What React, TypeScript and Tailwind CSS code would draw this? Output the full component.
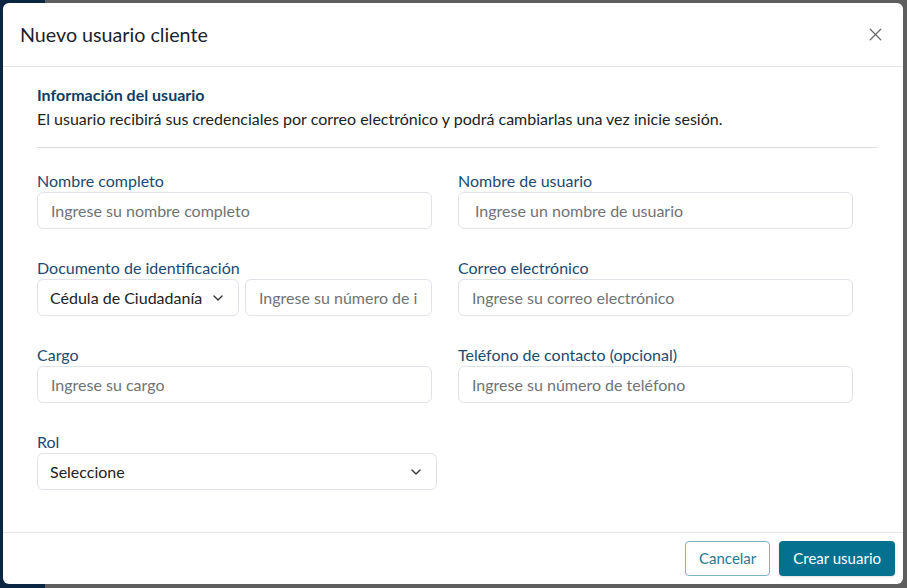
import React from "react";
import { ChevronDown, X } from "lucide-react";

const Field: React.FC<{ label: string; children: React.ReactNode }> = ({
  label,
  children,
}) => (
  <div className="flex flex-col">
    <label className="mb-px text-[16px] leading-[20px] text-[#1c4a72]">
      {label}
    </label>
    {children}
  </div>
);

const inputCls =
  "h-[37px] w-full rounded-md border border-[#dfe3e8] bg-white px-[13px] text-[16px] text-[#333] placeholder:text-[#6f7378] outline-none";

const App: React.FC = () => {
  return (
    <div
      className="relative h-[588px] w-[907px] overflow-hidden bg-[#6a6a6a]"
      style={{ fontFamily: "Lato, 'Open Sans', sans-serif" }}
    >
      {/* page behind the overlay */}
      <div className="flex h-full">
        <div className="w-[45px] bg-[#0b2643]" />
        <div className="flex-1 bg-[#5e5e5e]" />
      </div>

      {/* Modal */}
      <div className="absolute left-[3px] top-[3px] flex h-[581px] w-[900px] flex-col rounded-md bg-white">
        {/* Header */}
        <div className="flex h-[64px] items-center justify-between border-b border-[#e3e5e8] pl-[17px] pr-[17px]">
          <h2 className="text-[19.7px] text-[#1b1f2e]">Nuevo usuario cliente</h2>
          <X className="h-[21px] w-[21px] text-[#6b6b6b]" strokeWidth={1.5} />
        </div>

        {/* Body */}
        <div className="flex-1 pl-[34px] pr-[25px] pt-[18px]">
          <h3 className="text-[16px] font-bold leading-[20px] text-[#0f3d63]">
            Información del usuario
          </h3>
          <p className="mt-[4px] text-[16px] leading-[20px] text-[#222]">
            El usuario recibirá sus credenciales por correo electrónico y podrá
            cambiarlas una vez inicie sesión.
          </p>
          <div className="mt-[18px] border-t border-[#dcdfe3]" />

          <div className="mt-[23px] grid w-[816px] grid-cols-2 gap-x-[26px] gap-y-[29px]">
            <Field label="Nombre completo">
              <input className={inputCls} placeholder="Ingrese su nombre completo" />
            </Field>
            <Field label="Nombre de usuario">
              <input
                className={inputCls + " pl-[16px]"}
                placeholder="Ingrese un nombre de usuario"
              />
            </Field>

            <Field label="Documento de identificación">
              <div className="flex gap-[6px]">
                <div className="flex h-[37px] w-[202px] shrink-0 items-center justify-between rounded-md border border-[#dfe3e8] pl-[12px] pr-[12px] text-[16px] text-[#222]">
                  <span>Cédula de Ciudadanía</span>
                  <ChevronDown className="h-[16px] w-[16px] text-[#333]" strokeWidth={2} />
                </div>
                <input
                  className={inputCls + " min-w-0"}
                  placeholder="Ingrese su número de identificación"
                />
              </div>
            </Field>
            <Field label="Correo electrónico">
              <input
                className={inputCls}
                placeholder="Ingrese su correo electrónico"
              />
            </Field>

            <Field label="Cargo">
              <input className={inputCls} placeholder="Ingrese su cargo" />
            </Field>
            <Field label="Teléfono de contacto (opcional)">
              <input
                className={inputCls}
                placeholder="Ingrese su número de teléfono"
              />
            </Field>

            <Field label="Rol">
              <div className="flex h-[37px] w-[400px] items-center justify-between rounded-md border border-[#dfe3e8] pl-[12px] pr-[12px] text-[16px] text-[#222]">
                <span>Seleccione</span>
                <ChevronDown className="h-[16px] w-[16px] text-[#333]" strokeWidth={2} />
              </div>
            </Field>
          </div>
        </div>

        {/* Footer */}
        <div className="flex h-[52px] items-start justify-end gap-[9px] border-t border-[#e3e5e8] pr-[8px] pt-[8px]">
          <button className="h-[35px] rounded-[4px] border border-[#7bb4c6] bg-white px-[13px] text-[15px] text-[#2a7891]">
            Cancelar
          </button>
          <button className="h-[35px] rounded-[4px] bg-[#03718f] px-[14px] text-[15px] text-white shadow-sm">
            Crear usuario
          </button>
        </div>
      </div>
    </div>
  );
};

export default App;
